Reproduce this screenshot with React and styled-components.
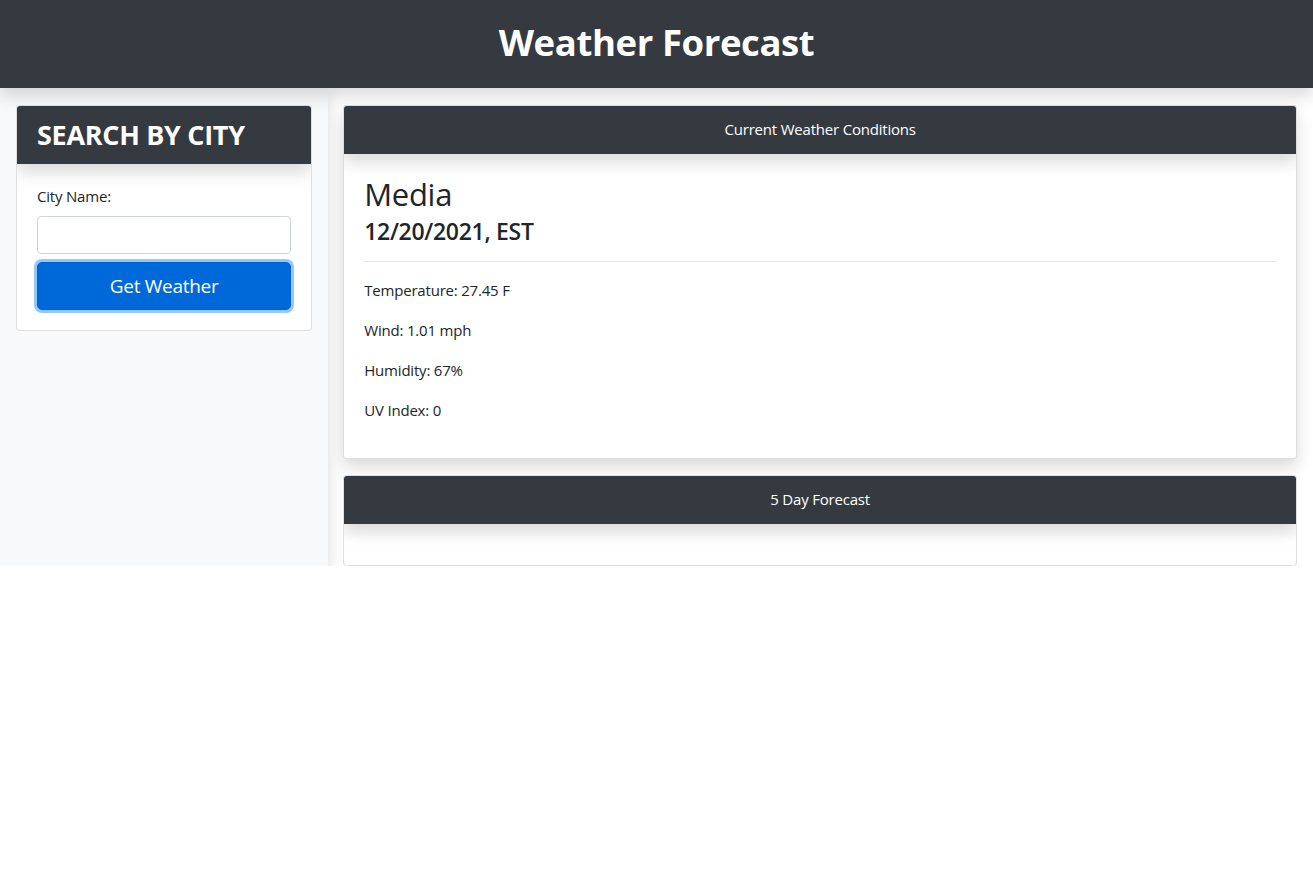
import React, { useState } from "react";
import styled, { createGlobalStyle } from "styled-components";

const GlobalStyle = createGlobalStyle`
  * { box-sizing: border-box; }
  body {
    margin: 0;
    background: #fff;
    color: #212529;
    font-family: "Open Sans", "Noto Sans", Arial, sans-serif;
    font-size: 16px;
    line-height: 1.5;
  }
`;

const TopBar = styled.header`
  height: 88px;
  padding-bottom: 4px;
  background: #343a40;
  color: #fff;
  display: flex;
  align-items: center;
  justify-content: center;
  box-shadow: 0 0.5rem 1rem rgba(0, 0, 0, 0.15);
  position: relative;
  z-index: 2;
`;

const Title = styled.h1`
  margin: 0;
  font-size: 36.5px;
  font-weight: 700;
  letter-spacing: -0.4px;
`;

const Row = styled.div`
  display: flex;
  align-items: stretch;
`;

const Sidebar = styled.aside`
  width: 25%;
  flex: 0 0 25%;
  padding: 17px 16px 16px;
  background: #f8f9fa;
  box-shadow: 0 0.5rem 1rem rgba(0, 0, 0, 0.15);
  position: relative;
  z-index: 1;
`;

const Main = styled.main`
  flex: 1;
  padding: 17px 16px 0 15px;
  display: flex;
  flex-direction: column;
  gap: 16px;
`;

const Card = styled.section`
  background: #fff;
  border: 1px solid rgba(0, 0, 0, 0.125);
  border-radius: 4px;
  overflow: hidden;
  box-shadow: ${(p) => (p.$raised ? "0 0.5rem 1rem rgba(0, 0, 0, 0.15)" : "none")};
`;

const CardHeader = styled.div`
  background: #343a40;
  color: #fff;
  height: ${(p) => p.$h}px;
  display: flex;
  align-items: center;
  justify-content: ${(p) => (p.$center ? "center" : "flex-start")};
  padding: 0 20px ${(p) => (p.$center ? 2 : 0)}px;
  font-size: ${(p) => p.$size}px;
  font-weight: ${(p) => (p.$bold ? 700 : 400)};
  box-shadow: 0 0.5rem 1rem rgba(0, 0, 0, 0.15);
  position: relative;
  letter-spacing: ${(p) => (p.$bold ? "-0.3px" : "-0.2px")};
`;

const CardBody = styled.div`
  padding: 20px;
  min-height: ${(p) => p.$min || 0}px;
`;

const Label = styled.label`
  display: block;
  margin: 0 0 8px;
  font-size: 15px;
  line-height: 24px;
  letter-spacing: -0.2px;
`;

const Input = styled.input`
  display: block;
  width: 100%;
  height: 38px;
  border: 1px solid #ced4da;
  border-radius: 4px;
  padding: 6px 12px;
  font: inherit;
  outline: none;
`;

const Button = styled.button`
  display: block;
  width: 100%;
  height: 48px;
  margin-top: 8px;
  border: 1px solid #0062cc;
  border-radius: 5px;
  background: #0069d9;
  color: #fff;
  font-family: inherit;
  font-size: 19px;
  letter-spacing: -0.3px;
  box-shadow: 0 0 0 3px rgba(38, 143, 255, 0.5);
  cursor: pointer;
`;

const City = styled.h2`
  margin: 2px 0 5px;
  font-size: 31px;
  font-weight: 500;
  line-height: 1.2;
  letter-spacing: -0.3px;
`;

const DateLine = styled.h3`
  margin: 0;
  font-size: 23px;
  font-weight: 600;
  line-height: 1.2;
  letter-spacing: -0.3px;
`;

const Divider = styled.hr`
  margin: 15px 0 16px;
  border: 0;
  border-top: 1px solid rgba(0, 0, 0, 0.1);
`;

const Stat = styled.p`
  margin: 0 0 16px;
  font-size: 15px;
  line-height: 24px;
  letter-spacing: -0.2px;
`;

const stats = [
  ["Temperature", "27.45 F"],
  ["Wind", "1.01 mph"],
  ["Humidity", "67%"],
  ["UV Index", "0"],
];

export default function App() {
  const [city, setCity] = useState("");

  return (
    <>
      <GlobalStyle />
      <TopBar>
        <Title>Weather Forecast</Title>
      </TopBar>
      <Row>
        <Sidebar>
          <Card>
            <CardHeader $h={58} $size={27} $bold>
              SEARCH BY CITY
            </CardHeader>
            <CardBody>
              <Label htmlFor="city">City Name:</Label>
              <Input id="city" value={city} onChange={(e) => setCity(e.target.value)} />
              <Button type="button">Get Weather</Button>
            </CardBody>
          </Card>
        </Sidebar>
        <Main>
          <Card $raised>
            <CardHeader $h={48} $size={15} $center>
              Current Weather Conditions
            </CardHeader>
            <CardBody>
              <City>Media</City>
              <DateLine>12/20/2021, EST</DateLine>
              <Divider />
              {stats.map(([k, v]) => (
                <Stat key={k}>
                  {k}: {v}
                </Stat>
              ))}
            </CardBody>
          </Card>
          <Card>
            <CardHeader $h={48} $size={15} $center>
              5 Day Forecast
            </CardHeader>
            <CardBody $min={41} />
          </Card>
        </Main>
      </Row>
    </>
  );
}
